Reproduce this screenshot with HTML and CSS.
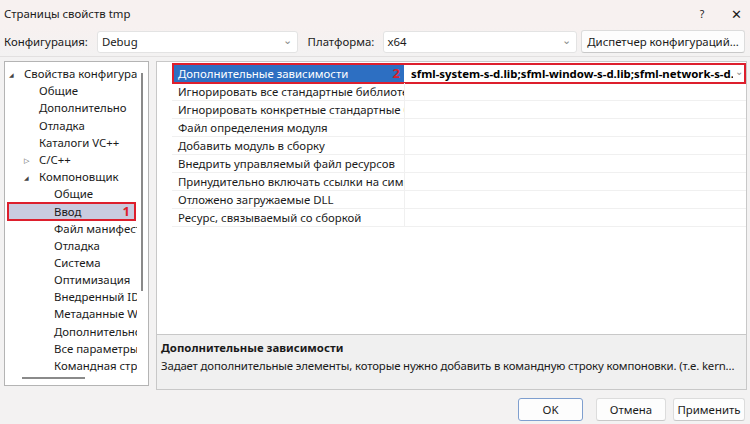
FILE: index.html
```html
<!DOCTYPE html>
<html lang="ru">
<head>
    <meta charset="UTF-8">
    <title>Страницы свойств tmp</title>
    <link rel="stylesheet" href="styles.css">
</head>
<body>
    <div class="dialog">
        <div class="titlebar">
            <span class="title">Страницы свойств tmp</span>
            <span class="tb-btn help">?</span>
            <span class="tb-btn close">✕</span>
        </div>

        <div class="toolbar">
            <span class="lbl">Конфигурация:</span>
            <div class="combo combo-config"><span>Debug</span><span class="chev">⌄</span></div>
            <span class="lbl lbl-platform">Платформа:</span>
            <div class="combo combo-platform"><span>x64</span><span class="chev">⌄</span></div>
            <button class="btn btn-manager">Диспетчер конфигураций...</button>
        </div>

        <div class="main">
            <div class="tree">
                <div class="tree-list">
                    <div class="node lvl1"><span class="arrow">◢</span>Свойства конфигурации</div>
                    <div class="node lvl2">Общие</div>
                    <div class="node lvl2">Дополнительно</div>
                    <div class="node lvl2">Отладка</div>
                    <div class="node lvl2">Каталоги VC++</div>
                    <div class="node lvl1b"><span class="arrow closed">▷</span>C/C++</div>
                    <div class="node lvl1b"><span class="arrow">◢</span>Компоновщик</div>
                    <div class="node lvl3">Общие</div>
                    <div class="node lvl3 selected"><span>Ввод</span><span class="mark">1</span></div>
                    <div class="node lvl3">Файл манифеста</div>
                    <div class="node lvl3">Отладка</div>
                    <div class="node lvl3">Система</div>
                    <div class="node lvl3">Оптимизация</div>
                    <div class="node lvl3">Внедренный IDL</div>
                    <div class="node lvl3">Метаданные Windows</div>
                    <div class="node lvl3">Дополнительно</div>
                    <div class="node lvl3">Все параметры</div>
                    <div class="node lvl3">Командная строка</div>
                </div>
                <div class="vscroll"></div>
                <div class="hscroll"></div>
            </div>

            <div class="right">
                <div class="grid">
                    <div class="row active">
                        <div class="name"><span>Дополнительные зависимости</span><span class="mark">2</span></div>
                        <div class="value"><span class="val-text">sfml-system-s-d.lib;sfml-window-s-d.lib;sfml-network-s-d.lib;sfml-audio-s-d.lib</span><span class="chev">⌄</span></div>
                    </div>
                    <div class="row"><div class="name">Игнорировать все стандартные библиотеки</div><div class="value"></div></div>
                    <div class="row"><div class="name">Игнорировать конкретные стандартные библиотеки</div><div class="value"></div></div>
                    <div class="row"><div class="name">Файл определения модуля</div><div class="value"></div></div>
                    <div class="row"><div class="name">Добавить модуль в сборку</div><div class="value"></div></div>
                    <div class="row"><div class="name">Внедрить управляемый файл ресурсов</div><div class="value"></div></div>
                    <div class="row"><div class="name">Принудительно включать ссылки на символы</div><div class="value"></div></div>
                    <div class="row"><div class="name">Отложено загружаемые DLL</div><div class="value"></div></div>
                    <div class="row"><div class="name">Ресурс, связываемый со сборкой</div><div class="value"></div></div>
                </div>
                <div class="desc">
                    <div class="desc-title">Дополнительные зависимости</div>
                    <div class="desc-text">Задает дополнительные элементы, которые нужно добавить в командную строку компоновки. (т.е. kern...</div>
                </div>
            </div>
        </div>

        <div class="footer">
            <button class="btn btn-ok">OK</button>
            <button class="btn btn-cancel">Отмена</button>
            <button class="btn btn-apply">Применить</button>
        </div>
    </div>
</body>
</html>
```

FILE: styles.css
```css
body {
    margin: 0;
    font-family: "Noto Sans", "Open Sans", sans-serif;
    font-size: 11.4px;
    color: #1a1a1a;
}
.dialog {
    width: 750px;
    height: 424px;
    background: #f3f2f2;
    overflow: hidden;
    display: flex;
    flex-direction: column;
}
.titlebar {
    height: 27px;
    display: flex;
    align-items: center;
    padding-left: 4px;
    background: #f7f1f0;
}
.title {
    flex: 1;
}
.tb-btn {
    text-align: center;
}
.help {
    width: 40px;
    font-size: 10.5px;
}
.close {
    width: 28px;
    font-size: 13px;
}

/* toolbar with configuration / platform */
.toolbar {
    height: 29px;
    display: flex;
    align-items: center;
    padding: 0 5px 0 4px;
    border-bottom: 1px solid #e2e0e0;
    background: linear-gradient(#f7f1f0, #f3f2f2);
}
.lbl {
    width: 93px;
}
.lbl-platform {
    width: 75px;
    margin-left: 10px;
}
.combo {
    height: 22px;
    box-sizing: border-box;
    background: #fff;
    border: 1px solid #e3e3e3;
    border-radius: 3px;
    display: flex;
    align-items: center;
    justify-content: space-between;
    padding: 0 5px 0 4px;
}
.combo-config {
    width: 201px;
}
.combo-platform {
    width: 195px;
}
.chev {
    color: #8a8a8a;
    font-size: 11px;
    line-height: 10px;
    margin-top: -4px;
}
.btn {
    font-family: inherit;
    font-size: 11.4px;
    color: #1a1a1a;
    background: #fdfdfd;
    border: 1px solid #dcdcdc;
    border-bottom-color: #c8c8c8;
    border-radius: 3px;
    height: 23px;
    padding: 0;
}
.btn-manager {
    width: 164px;
    margin-left: 4px;
}

/* main area */
.main {
    display: flex;
    padding: 4px 3px 0 4px;
    height: 329px;
}
.tree {
    position: relative;
    width: 145px;
    height: 325px;
    box-sizing: border-box;
    border: 1px solid #b4b4b4;
    background: #fff;
    overflow: hidden;
}
.tree-list {
    width: 132px;
    overflow: hidden;
    padding-top: 3px;
}
.node {
    height: 17.2px;
    line-height: 17px;
    white-space: nowrap;
    position: relative;
}
.lvl1 {
    padding-left: 19px;
}
.lvl1b {
    padding-left: 34px;
}
.lvl2 {
    padding-left: 34px;
}
.lvl3 {
    padding-left: 49px;
}
.arrow {
    display: inline-block;
    width: 15px;
    margin-left: -15px;
    font-size: 6px;
    color: #444;
    vertical-align: 1px;
}
.arrow.closed {
    font-size: 7px;
}
.node.selected {
    margin-left: 2px;
    padding-left: 45px;
    width: 129px;
    box-sizing: border-box;
    height: 19px;
    margin-top: -1px;
    margin-bottom: -1px;
    border: 2px solid #dd1f2d;
    background: #c9cbdf;
    display: flex;
    justify-content: space-between;
    align-items: center;
    padding-right: 4px;
}
.mark {
    color: #dd1f2d;
    font-weight: bold;
    font-size: 13px;
}
.vscroll {
    position: absolute;
    right: 5px;
    top: 11px;
    width: 2px;
    height: 218px;
    background: #8a8a8a;
}
.hscroll {
    position: absolute;
    left: 17px;
    bottom: 6px;
    width: 63px;
    height: 2px;
    background: #8a8a8a;
}

/* property grid */
.right {
    margin-left: 7px;
    width: 591px;
    display: flex;
    flex-direction: column;
}
.grid {
    height: 273px;
    box-sizing: border-box;
    border: 1px solid #c8c8c8;
    border-bottom: none;
    background: #fff;
    padding: 1px 0 0 15px;
}
.row {
    display: flex;
    height: 18px;
    line-height: 17px;
    border-bottom: 1px solid #f0f0f0;
    box-sizing: border-box;
}
.row .name {
    width: 233px;
    padding-left: 6px;
    box-sizing: border-box;
    white-space: nowrap;
    overflow: hidden;
    border-right: 1px solid #f0f0f0;
}
.row .value {
    flex: 1;
    padding-left: 4px;
    white-space: nowrap;
    overflow: hidden;
}
.row.active {
    height: 21px;
    margin-bottom: -1px;
    border: 2px solid #dd1f2d;
}
.row.active .name {
    background: #2d6fc2;
    color: #fff;
    display: flex;
    justify-content: space-between;
    padding-left: 4px;
    padding-right: 4px;
    border-right: 3px solid #fff;
}
.row.active .value {
    display: flex;
    justify-content: space-between;
    align-items: center;
    font-weight: bold;
    color: #000;
    padding-right: 1px;
}
.val-text {
    overflow: hidden;
    width: 322px;
    flex-shrink: 0;
}
.row.active .chev {
    margin-top: -6px;
    font-weight: normal;
    font-size: 10px;
}
.desc {
    height: 56px;
    box-sizing: border-box;
    border: 1px solid #c8c8c8;
    background: #f0f0f0;
    padding: 4px 4px 0 4px;
}
.desc-title {
    font-weight: bold;
    line-height: 18px;
}
.desc-text {
    line-height: 18px;
    white-space: nowrap;
    letter-spacing: -0.14px;
}

/* dialog buttons */
.footer {
    display: flex;
    justify-content: flex-end;
    padding: 8px 5px 0 0;
}
.footer .btn {
    margin-left: 7px;
}
.btn-ok {
    width: 65px;
    border: 1px solid #7f9fcf;
}
.footer .btn-cancel {
    width: 70px;
    margin-left: 13px;
}
.btn-apply {
    width: 72px;
}
```
